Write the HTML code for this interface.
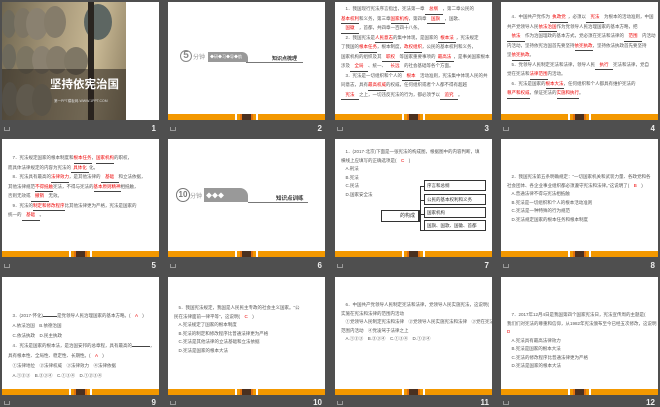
<!DOCTYPE html>
<html><head><meta charset="utf-8"><style>
*{margin:0;padding:0;box-sizing:border-box}
body{width:660px;height:407px;background:#4f4f4f;position:relative;overflow:hidden;font-family:"Liberation Sans","Noto Sans CJK SC",sans-serif}
.s{position:absolute;width:157px;height:118px;background:#fff;overflow:hidden}
.ft{position:absolute;left:0;bottom:0;width:100%;height:6px;background:#f39800}
.ft i{position:absolute;left:50%;margin-left:-12px;top:0;width:24px;height:6px;background:linear-gradient(90deg,#fff 0 2px,#f39800 2px 5px,#e07010 5px 7px,#4a3020 7px 16px,#e07010 16px 18px,#f39800 18px 21px,#fff 21px 23px,#f39800 23px)}
.n{position:absolute;color:#eee;font-size:8px;font-weight:bold;text-align:right;width:30px}
.ic{position:absolute;width:6px;height:4px;border:1px solid #999;border-top:none}
.t{position:absolute;font-size:4.5px;line-height:8.5px;color:#555;white-space:nowrap}
.r{color:#e00}
.u{display:inline-block;border-bottom:0.5px solid #444;min-width:18px;text-align:center}
.hd{position:absolute;left:0;width:100%;height:16px}
</style></head><body>

<!-- slide 1 -->
<div class="s" style="left:2px;top:2px">
 <div style="position:absolute;left:0;top:0;width:124px;height:118px;background:linear-gradient(100deg,#6f6650,#a8997a 40%,#c9b995 70%,#8d7f62)"></div>
 <div style="position:absolute;left:0;top:8px;width:14px;height:28px;border-radius:50%;background:#6e6a5c"></div>
 <div style="position:absolute;left:12px;top:6px;width:18px;height:30px;border-radius:50%;background:#7d7564"></div>
 <div style="position:absolute;left:24px;top:6px;width:22px;height:32px;border-radius:50%;background:#8a8170"></div>
 <div style="position:absolute;left:42px;top:4px;width:22px;height:32px;border-radius:50%;background:#857c6a"></div>
 <div style="position:absolute;left:82px;top:2px;width:28px;height:36px;border-radius:50%;background:#5d6662"></div>
 <div style="position:absolute;left:0;top:42px;width:14px;height:26px;border-radius:50%;background:#6e6a5c"></div>
 <div style="position:absolute;left:14px;top:44px;width:20px;height:28px;border-radius:50%;background:#7c7562"></div>
 <div style="position:absolute;left:30px;top:44px;width:20px;height:28px;border-radius:50%;background:#8a8170"></div>
 <div style="position:absolute;left:44px;top:44px;width:22px;height:28px;border-radius:50%;background:#857c6a"></div>
 <div style="position:absolute;left:62px;top:45px;width:24px;height:28px;border-radius:50%;background:#7f7765"></div>
 <div style="position:absolute;left:86px;top:0;width:6px;height:118px;background:#2a2520"></div>
 <div style="position:absolute;left:0;top:67px;width:124px;height:51px;background:rgba(40,35,30,.55)"></div>
 <div style="position:absolute;left:0;top:80px;width:16px;height:34px;border-radius:50%;background:#555046"></div>
 <div style="position:absolute;left:14px;top:82px;width:22px;height:32px;border-radius:50%;background:#5f594d"></div>
 <div style="position:absolute;left:30px;top:82px;width:20px;height:32px;border-radius:50%;background:#5a5448"></div>
 <div style="position:absolute;left:48px;top:74px;font-size:11.5px;font-weight:bold;color:#fff;white-space:nowrap">坚持依宪治国</div>
 <div style="position:absolute;left:52px;top:97px;font-size:3.5px;color:#ddd;white-space:nowrap">第一PPT模板网-WWW.1PPT.COM</div>
</div>
<div class="ic" style="left:4px;top:127px"></div><div class="n" style="left:126px;top:124px">1</div>

<!-- slide 2 -->
<div class="s" style="left:168px;top:2px">
 <div class="hd" style="top:47px">
  <div style="position:absolute;left:12px;top:1px;width:12px;height:12px;border-radius:50%;background:#fff;border:1.5px solid #888;color:#888;font-size:10px;font-weight:bold;text-align:center;line-height:9px">5</div>
  <div style="position:absolute;left:25px;top:3px;font-size:6px;color:#999">分钟</div>
  <div style="position:absolute;left:40px;top:3px;width:40px;height:10px;background:#999;border-radius:0 6px 0 0"></div>
  <div style="position:absolute;left:42px;top:5px;font-size:4px;color:#fff;white-space:nowrap">◆研◆习◆导◆航</div>
  <div style="position:absolute;left:78px;top:13px;width:57px;height:0.5px;background:#777"></div>
  <div style="position:absolute;left:104px;top:6px;font-size:5px;color:#333;font-weight:bold">知识点梳理</div>
 </div>
 <div class="ft"><i></i></div>
</div>
<div class="ic" style="left:170px;top:127px"></div><div class="n" style="left:292px;top:124px">2</div>

<!-- slide 3 -->
<div class="s" style="left:335px;top:2px">
 <div class="t" style="left:6px;top:3px">
 　1．我国现行宪法序言指出，宪法第一章<span class="u r">总纲</span>，第二章公民的<br>
 <span class="u r">基本权利</span>和义务，第三章<span class="u r">国家机构</span>，第四章<span class="u r">国旗</span>，国歌、<br>
 <span class="u r">国徽</span>，首都，共四章一百四十八条。<br>
 　2．我国宪法是<span class="u r">人民意志</span>的集中体现，是国家的<span class="u r">根本法</span>，宪法规定<br>
 了我国的<span class="u r">根本任务</span>，根本制度，<span class="u r">政权组织</span>，公民的基本权利和义务，<br>
 国家机构的组织及其<span class="u r">职权</span>等国家重要事项的<span class="u r">最高法</span>，是事关国家根本<br>
 涉及<span class="u r">全局</span>、统一、<span class="u r">长远</span>的社会基础等各个方面。<br>
 　3．宪法是一切组织和个人的<span class="u r">根本</span>活动准则，宪法集中体现人民的共<br>
 同意志，具有<span class="u r">最高权威</span>的权威，任何组织或者个人都不得有超越<br>
 <span class="u r">宪法</span>之上，一切违反宪法的行为，都必须予以<span class="u r">追究</span>。
 </div>
 <div class="ft"><i></i></div>
</div>
<div class="ic" style="left:337px;top:127px"></div><div class="n" style="left:459px;top:124px">3</div>

<!-- slide 4 -->
<div class="s" style="left:501px;top:2px">
 <div class="t" style="left:6px;top:11px">
 　4．中国共产党作为<span class="u r">执政党</span>，必须以<span class="u r">宪法</span>为根本的活动准则，中国<br>
 共产党领导人民<span class="u r">依法治国</span>作为党领导人民治理国家的基本方略，把<br>
 <span class="u r">依法</span>作为治国理政的基本方式，党必须在宪法和法律的<span class="u r">范围</span>内活动<br>
 内活动，坚持依宪治国首先要坚持<span class="u r">依宪执政</span>，坚持依法执政首先要坚持<br>
 坚<span class="u r">依宪执政</span>。<br>
 　5．党领导人民制定宪法和法律，领导人民<span class="u r">执行</span>宪法和法律，党自<br>
 觉在宪法和<span class="u r">法律范围</span>内活动。<br>
 　6．宪法是国家的<span class="u r">根本大法</span>，任何组织和个人都具有维护宪法的<br>
 <span class="u r">尊严和权威</span>，保证宪法的<span class="u r">实施和执行</span>。
 </div>
 <div class="ft"><i></i></div>
</div>
<div class="ic" style="left:503px;top:127px"></div><div class="n" style="left:625px;top:124px">4</div>

<!-- slide 5 -->
<div class="s" style="left:2px;top:139px">
 <div class="t" style="left:6px;top:15px">
 　7．宪法规定国家的根本制度和<span class="u r">根本任务</span>，<span class="u r">国家机构</span>的职权，<br>
 而具体法律规定的内容为宪法的<span class="u r">具体化</span>化。<br>
 　8．宪法具有最高的<span class="u r">法律效力</span>，是其他法律的<span class="u r">基础</span>和立法依据，<br>
 其他法律规范<span class="u r">不得抵触</span>宪法，不得与宪法的<span class="u r">基本原则精神</span>相抵触，<br>
 否则无效或<span class="u r">撤销</span>无效。<br>
 　9．宪法的<span class="u r">制定和修改程序</span>比其他法律更为严格，宪法是国家的<br>
 统一的<span class="u r">基础</span>。
 </div>
 <div class="ft"><i></i></div>
</div>
<div class="ic" style="left:4px;top:264px"></div><div class="n" style="left:126px;top:261px">5</div>

<!-- slide 6 -->
<div class="s" style="left:168px;top:139px">
 <div class="hd" style="top:49px">
  <div style="position:absolute;left:8px;top:0;width:14px;height:14px;border-radius:50%;background:#fff;border:1.5px solid #777;color:#777;font-size:8px;font-weight:bold;text-align:center;line-height:11px">10</div>
  <div style="position:absolute;left:22px;top:3px;font-size:6px;color:#999">分钟</div>
  <div style="position:absolute;left:36px;top:0;width:44px;height:14px;background:#999;border-radius:0 8px 0 0"></div>
  <div style="position:absolute;left:38px;top:3px;font-size:6px;color:#fff">◆◆◆</div>
  <div style="position:absolute;left:80px;top:14px;width:60px;height:0.5px;background:#777"></div>
  <div style="position:absolute;left:108px;top:6px;font-size:5.5px;color:#333;font-weight:bold">知识点训练</div>
 </div>
 <div class="ft"><i></i></div>
</div>
<div class="ic" style="left:170px;top:264px"></div><div class="n" style="left:292px;top:261px">6</div>

<!-- slide 7 -->
<div class="s" style="left:335px;top:139px">
 <div class="t" style="left:6px;top:9px">
 　1．(2017·北京)下面是一张宪法的构成图，根据图中的内容判断，填<br>
 横线上应填写的正确选项是(　<span class="r">C</span>　)<br>
 　A.刑法<br>　B.宪法<br>　C.民法<br>　D.国家安全法
 </div>
 <div style="position:absolute;left:46px;top:71px;width:39px;height:12px;border:1px solid #333;border-right-width:2px;font-size:5px;text-align:right;padding-right:3px;line-height:10px;color:#333">的构成</div>
 <div style="position:absolute;left:85px;top:47px;width:0;height:45px;border-left:0.5px solid #333"></div>
 <div style="position:absolute;left:85px;top:47px;width:4px;border-top:0.5px solid #333"></div>
 <div style="position:absolute;left:85px;top:61px;width:4px;border-top:0.5px solid #333"></div>
 <div style="position:absolute;left:85px;top:75px;width:4px;border-top:0.5px solid #333"></div>
 <div style="position:absolute;left:85px;top:91px;width:4px;border-top:0.5px solid #333"></div>
 <div style="position:absolute;left:89px;top:41px;width:62px;height:11px;border:1px solid #333;font-size:4.5px;line-height:9px;padding-left:2px;color:#333">序言和总纲</div>
 <div style="position:absolute;left:89px;top:55px;width:62px;height:11px;border:1px solid #333;font-size:4.5px;line-height:9px;padding-left:2px;color:#333">公民的基本权利和义务</div>
 <div style="position:absolute;left:89px;top:68px;width:62px;height:11px;border:1px solid #333;font-size:4.5px;line-height:9px;padding-left:2px;color:#333">国家机构</div>
 <div style="position:absolute;left:89px;top:81px;width:62px;height:11px;border:1px solid #333;font-size:4.5px;line-height:9px;padding-left:2px;color:#333">国旗、国歌、国徽、首都</div>
 <div class="ft"><i></i></div>
</div>
<div class="ic" style="left:337px;top:264px"></div><div class="n" style="left:459px;top:261px">7</div>

<!-- slide 8 -->
<div class="s" style="left:501px;top:139px">
 <div class="t" style="left:6px;top:34px">
 　2．我国宪法第五条明确规定：“一切国家机关和武装力量、各政党和各<br>
 社会团体、各企业事业组织都必须遵守宪法和法律。”这说明了(　<span class="r">B</span>　)<br>
 　A.普通法律不得与宪法相抵触<br>
 　B.宪法是一切组织和个人的根本活动准则<br>
 　C.宪法是一种特殊的行为规范<br>
 　D.宪法规定国家的根本任务和根本制度
 </div>
 <div class="ft"><i></i></div>
</div>
<div class="ic" style="left:503px;top:264px"></div><div class="n" style="left:625px;top:261px">8</div>

<!-- slide 9 -->
<div class="s" style="left:2px;top:277px">
 <div class="t" style="left:6px;top:34px;line-height:10px">
 　3．(2017·怀化)<span class="u" style="min-width:14px"></span>是党领导人民治理国家的基本方略。(　<span class="r">A</span>　)<br>
 　A.依法治国　B.依德治国<br>
 　C.依法执政　D.民主执政<br>
 　4．宪法是国家的根本法，是治国安邦的总章程，具有最高的<span class="u"></span>，<br>
 具有根本性、全局性、稳定性、长期性。(　<span class="r">A</span>　)<br>
 　①法律地位　②法律权威　③法律效力　④法律依据<br>
 　A.①②③　B.②③④　C.①③④　D.①②③④
 </div>
 <div class="ft"><i></i></div>
</div>
<div class="ic" style="left:4px;top:401px"></div><div class="n" style="left:126px;top:398px">9</div>

<!-- slide 10 -->
<div class="s" style="left:168px;top:277px">
 <div class="t" style="left:6px;top:27px">
 　5．我国宪法规定，我国是人民民主专政的社会主义国家。“公<br>
 民在法律面前一律平等”，这说明(　<span class="r">C</span>　)<br>
 　A.宪法规定了国家的根本制度<br>
 　B.宪法的制定和修改程序比普通法律更为严格<br>
 　C.宪法是其他法律的立法基础和立法依据<br>
 　D.宪法是国家的根本大法
 </div>
 <div class="ft"><i></i></div>
</div>
<div class="ic" style="left:170px;top:401px"></div><div class="n" style="left:292px;top:398px">10</div>

<!-- slide 11 -->
<div class="s" style="left:335px;top:277px">
 <div class="t" style="left:6px;top:24px">
 　6．中国共产党领导人民制定宪法和法律，党领导人民实施宪法，这说明(<br>
 实施在宪法和法律的范围内活动<br>
 　①党领导人民制定宪法和法律　②党领导人民实施宪法和法律　③党在宪法和法律<br>
 范围内活动　④党凌驾于法律之上<br>
 　A.①②③　B.②③④　C.①③④　D.①②④
 </div>
 <div class="ft"><i></i></div>
</div>
<div class="ic" style="left:337px;top:401px"></div><div class="n" style="left:459px;top:398px">11</div>

<!-- slide 12 -->
<div class="s" style="left:501px;top:277px">
 <div class="t" style="left:6px;top:34px">
 　7．2017年12月4日是我国第四个国家宪法日，宪法宣传周的主题是(　<br>
 我们们对宪法的尊重和信仰，从1982年宪法颁布至今已经五次修改，这说明<br>
 <span class="r">D</span><br>
 　A.宪法具有最高法律效力<br>
 　B.宪法是国家的根本大法<br>
 　C.宪法的修改程序比普通法律更为严格<br>
 　D.宪法是国家的根本大法
 </div>
 <div class="ft"><i></i></div>
</div>
<div class="ic" style="left:503px;top:401px"></div><div class="n" style="left:625px;top:398px">12</div>

</body></html>
